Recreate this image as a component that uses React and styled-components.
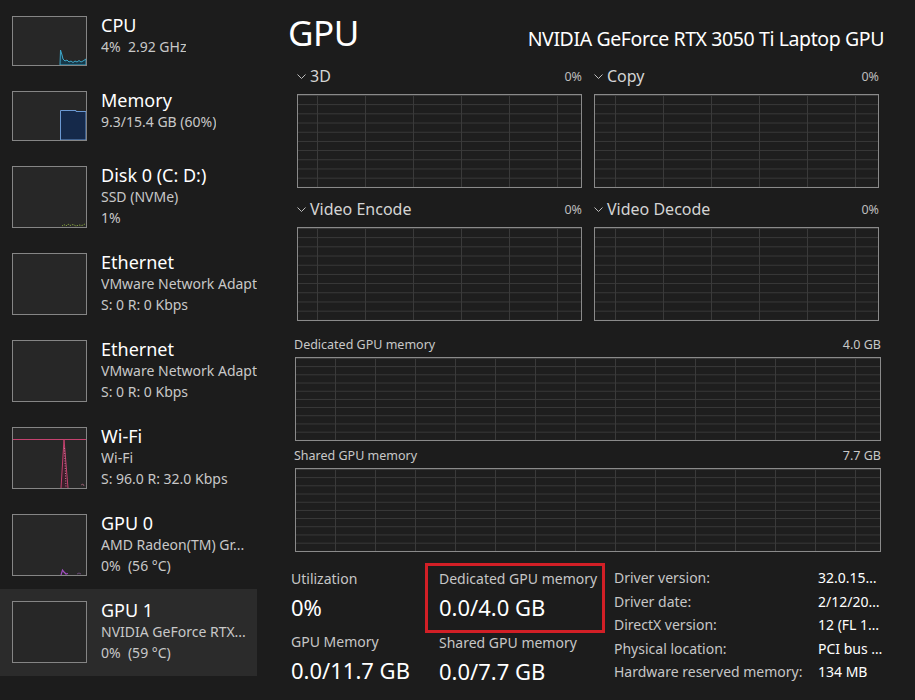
import React from 'react';
import styled, { createGlobalStyle } from 'styled-components';

const Global = createGlobalStyle`
  html, body { margin: 0; padding: 0; background: #1c1c1c; overflow: hidden; }
  body { font-family: "Noto Sans", "Open Sans", sans-serif; color: #ffffff; }
  * { box-sizing: border-box; }
`;

const Window = styled.div`
  width: 915px;
  height: 700px;
  display: flex;
  background: #1c1c1c;
  overflow: hidden;
`;

const Sidebar = styled.nav`
  width: 257px;
  flex: none;
  padding-top: 4px;
  display: flex;
  flex-direction: column;
  overflow: hidden;
`;

const SideItem = styled.div`
  display: flex;
  align-items: flex-start;
  gap: 14px;
  padding: 12px 0 13px 12px;
  background: ${p => (p.$selected ? '#2b2b2b' : 'transparent')};
  overflow: hidden;
`;

const Thumb = styled.div`
  flex: none;
  width: 75px;
  height: ${p => p.$h}px;
  border: 1px solid #858585;
  background: #272727;
  svg { display: block; }
`;

const SideText = styled.div`
  margin-top: -3px;
  min-width: 0;
  display: flex;
  flex-direction: column;
  white-space: pre;
`;

const SideTitle = styled.div`
  font-size: 18px;
  line-height: 24px;
  color: #ffffff;
`;

const SideSub = styled.div`
  font-size: 14px;
  line-height: 20.5px;
  color: #c8c8c8;
  overflow: hidden;
`;

const Main = styled.main`
  flex: 1;
  min-width: 0;
  padding: 15px 34px 0 34px;
  display: flex;
  flex-direction: column;
`;

const Header = styled.header`
  display: flex;
  align-items: baseline;
  justify-content: space-between;
  height: 35px;
`;

const PageTitle = styled.h1`
  margin: 0 0 0 -3px;
  font-size: 35px;
  line-height: 35px;
  font-weight: 400;
  letter-spacing: -0.5px;
`;

const DeviceName = styled.div`
  margin-right: -3px;
  font-size: 19.5px;
  letter-spacing: -0.4px;
  color: #ffffff;
`;

const TopGrid = styled.div`
  margin: 14px 2px 0 6px;
  display: grid;
  grid-template-columns: 1fr 1fr;
  column-gap: 12px;
  row-gap: 9px;
`;

const Engine = styled.section`
  display: flex;
  flex-direction: column;
  gap: 6px;
`;

const EngineHead = styled.div`
  height: 24px;
  display: flex;
  align-items: center;
  gap: 4px;
`;

const EngineName = styled.span`
  font-size: 16px;
  line-height: 24px;
  color: #d4d4d4;
`;

const Pct = styled.span`
  margin-left: auto;
  font-size: 12.5px;
  color: #bdbdbd;
`;

const Graph = styled.div`
  height: ${p => p.$h}px;
  border: 1px solid #8a8a8a;
  background-color: #1e1e1e;
  background-image:
    linear-gradient(to right, #3a3a3a 1px, transparent 1px),
    linear-gradient(to bottom, #3a3a3a 1px, transparent 1px);
  background-size: ${p => p.$col}px 100%, 100% ${p => (p.$h - 2) / 10}px;
  background-position: ${p => p.$off}px 0, 0 0;
  margin-left: ${p => p.$ml || 0}px;
`;

const MemSection = styled.section`
  margin-top: ${p => p.$mt}px;
  padding-left: 3px;
  display: flex;
  flex-direction: column;
  gap: 3px;
`;

const MemHead = styled.div`
  display: flex;
  justify-content: space-between;
  font-size: 12.5px;
  line-height: 18px;
  color: #c8c8c8;
`;

const Stats = styled.div`
  margin-top: 11px;
  display: grid;
  grid-template-columns: 134px 180px 1fr;
  align-items: start;
`;

const StatCol = styled.div`
  padding-top: ${p => p.$pt || 0}px;
  display: flex;
  flex-direction: column;
`;

const Highlight = styled.div`
  height: 70px;
  border: 3px solid #d21f26;
  padding: 3px 8px 0 11px;
`;

const StatBlock = styled.div`
  display: flex;
  flex-direction: column;
  padding-left: ${p => p.$pl || 0}px;
  margin-top: ${p => p.$mt || 0}px;
`;

const StatLabel = styled.div`
  font-size: 14px;
  line-height: 20px;
  color: #c6c6c6;
  white-space: nowrap;
`;

const StatValue = styled.div`
  margin-top: 3px;
  font-size: 22px;
  line-height: 30px;
  color: #ffffff;
  white-space: nowrap;
`;

const Props = styled.div`
  padding: 3px 0 0 9px;
  display: grid;
  grid-template-columns: 204px 1fr;
  font-size: 14px;
  line-height: 23.5px;
  white-space: nowrap;
`;

const PropKey = styled.div`
  color: #c6c6c6;
`;

const PropVal = styled.div`
  color: #ffffff;
`;

const Chevron = () => (
  <svg width="9" height="5" viewBox="0 0 9 5">
    <path d="M0.5 0.5 L4.5 4.5 L8.5 0.5" fill="none" stroke="#bdbdbd" strokeWidth="1" />
  </svg>
);

const Spark = ({ kind, h }) => {
  const H = h - 2;
  if (kind === 'cpu') {
    return (
      <svg width="73" height={H} viewBox={`0 0 73 ${H}`}>
        <path
          d="M47 48 L47.5 33 L49 38 L50 42 L52 44 L54 43 L56 45 L58 44 L60 45.5 L62 44 L64 45 L66 43.5 L68 45 L70 44 L73 42 L73 48 Z"
          fill="#173848"
          stroke="#3fa7c9"
          strokeWidth="1"
        />
      </svg>
    );
  }
  if (kind === 'mem') {
    return (
      <svg width="73" height={H} viewBox={`0 0 73 ${H}`}>
        <path d="M47.5 48 L47.5 18.5 L63 18.5 L63 19.5 L73 19.5 L73 48 Z" fill="#15294a" stroke="#6b98d2" strokeWidth="1" />
      </svg>
    );
  }
  if (kind === 'disk') {
    return (
      <svg width="73" height={H} viewBox={`0 0 73 ${H}`}>
        <path d="M49 59 L51 57.5 L53 59 L55 57 L57 58.5 L60 57.5 L63 59 L66 58 L69 58.5 L72 57" fill="none" stroke="#7f9a3c" strokeWidth="1" strokeDasharray="1.5 1" />
      </svg>
    );
  }
  if (kind === 'wifi') {
    return (
      <svg width="73" height={H} viewBox={`0 0 73 ${H}`}>
        <line x1="0" y1="11.5" x2="73" y2="11.5" stroke="#c4426f" strokeWidth="1" />
        <path d="M48 60 L51 11.5 L55 60" fill="#3a1e2a" stroke="#c4426f" strokeWidth="1" />
        <path d="M51.5 20 L53 60" stroke="#d07a9c" strokeWidth="1" strokeDasharray="1 1.5" />
        <path d="M68 57 L70 56 L71 58" fill="none" stroke="#8a5a6a" strokeWidth="1" />
      </svg>
    );
  }
  if (kind === 'gpu0') {
    return (
      <svg width="73" height={H} viewBox={`0 0 73 ${H}`}>
        <path d="M48 60 L49.5 55 L51 57 L53 59 L55 58.5" fill="none" stroke="#a24ec2" strokeWidth="1.2" />
        <path d="M64 59 L66 58 L68 59" fill="none" stroke="#6a4a78" strokeWidth="1" />
      </svg>
    );
  }
  return null;
};

const sideItems = [
  { title: 'CPU', lines: ['4%  2.92 GHz'], h: 50, kind: 'cpu' },
  { title: 'Memory', lines: ['9.3/15.4 GB (60%)'], h: 50, kind: 'mem' },
  { title: 'Disk 0 (C: D:)', lines: ['SSD (NVMe)', '1%'], h: 62, kind: 'disk' },
  { title: 'Ethernet', lines: ['VMware Network Adapt', 'S: 0 R: 0 Kbps'], h: 62 },
  { title: 'Ethernet', lines: ['VMware Network Adapt', 'S: 0 R: 0 Kbps'], h: 62 },
  { title: 'Wi-Fi', lines: ['Wi-Fi', 'S: 96.0 R: 32.0 Kbps'], h: 62, kind: 'wifi' },
  { title: 'GPU 0', lines: ['AMD Radeon(TM) Gr...', '0%  (56 °C)'], h: 62, kind: 'gpu0' },
  { title: 'GPU 1', lines: ['NVIDIA GeForce RTX...', '0%  (59 °C)'], h: 62, selected: true },
];

const engines = [
  { name: '3D', off: 19 },
  { name: 'Copy', off: 20 },
  { name: 'Video Encode', off: 19 },
  { name: 'Video Decode', off: 20 },
];

const props = [
  ['Driver version:', '32.0.15…'],
  ['Driver date:', '2/12/20…'],
  ['DirectX version:', '12 (FL 1…'],
  ['Physical location:', 'PCI bus …'],
  ['Hardware reserved memory:', '134 MB'],
];

export default function App() {
  return (
    <>
      <Global />
      <Window>
        <Sidebar>
          {sideItems.map((it, i) => (
            <SideItem key={i} $selected={it.selected}>
              <Thumb $h={it.h}>
                <Spark kind={it.kind} h={it.h} />
              </Thumb>
              <SideText>
                <SideTitle>{it.title}</SideTitle>
                {it.lines.map((l, j) => (
                  <SideSub key={j}>{l}</SideSub>
                ))}
              </SideText>
            </SideItem>
          ))}
        </Sidebar>
        <Main>
          <Header>
            <PageTitle>GPU</PageTitle>
            <DeviceName>NVIDIA GeForce RTX 3050 Ti Laptop GPU</DeviceName>
          </Header>
          <TopGrid>
            {engines.map(e => (
              <Engine key={e.name}>
                <EngineHead>
                  <Chevron />
                  <EngineName>{e.name}</EngineName>
                  <Pct>0%</Pct>
                </EngineHead>
                <Graph $h={94} $col={48} $off={e.off} />
              </Engine>
            ))}
          </TopGrid>
          <MemSection $mt={15}>
            <MemHead>
              <span>Dedicated GPU memory</span>
              <span>4.0 GB</span>
            </MemHead>
            <Graph $h={84} $col={40} $off={39} $ml={1} />
          </MemSection>
          <MemSection $mt={6}>
            <MemHead>
              <span>Shared GPU memory</span>
              <span>7.7 GB</span>
            </MemHead>
            <Graph $h={84} $col={40} $off={39} $ml={1} />
          </MemSection>
          <Stats>
            <StatCol $pt={6}>
              <StatBlock>
                <StatLabel>Utilization</StatLabel>
                <StatValue>0%</StatValue>
              </StatBlock>
              <StatBlock $mt={10}>
                <StatLabel>GPU Memory</StatLabel>
                <StatValue>0.0/11.7 GB</StatValue>
              </StatBlock>
            </StatCol>
            <StatCol>
              <Highlight>
                <StatBlock>
                  <StatLabel>Dedicated GPU memory</StatLabel>
                  <StatValue>0.0/4.0 GB</StatValue>
                </StatBlock>
              </Highlight>
              <StatBlock $pl={14}>
                <StatLabel>Shared GPU memory</StatLabel>
                <StatValue>0.0/7.7 GB</StatValue>
              </StatBlock>
            </StatCol>
            <Props>
              {props.map(([k, v]) => (
                <React.Fragment key={k}>
                  <PropKey>{k}</PropKey>
                  <PropVal>{v}</PropVal>
                </React.Fragment>
              ))}
            </Props>
          </Stats>
        </Main>
      </Window>
    </>
  );
}
